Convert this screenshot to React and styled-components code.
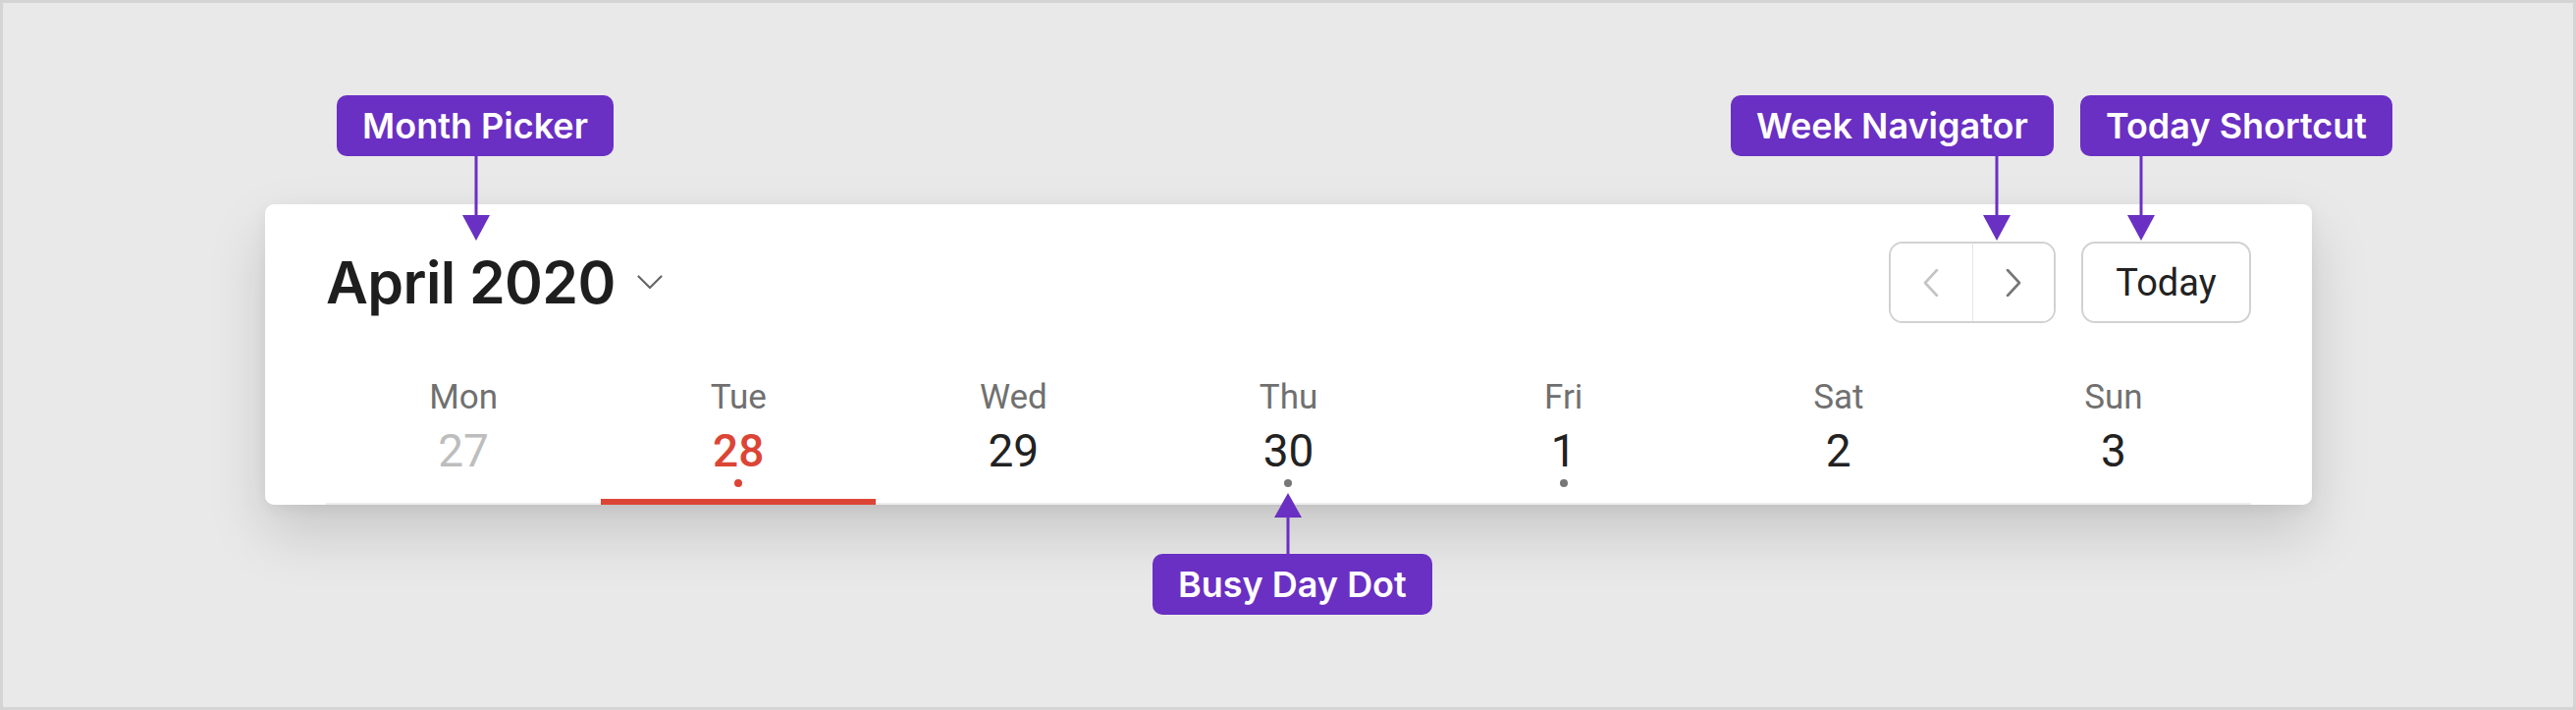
import styled, { createGlobalStyle } from "styled-components";

const GlobalStyle = createGlobalStyle`
  html, body {
    margin: 0;
    padding: 0;
    background: #e9e9e9;
  }
  * {
    box-sizing: border-box;
  }
`;

const PURPLE = "#6a2fc3";
const RED = "#dc4535";

const days = [
  { name: "Mon", date: 27, muted: true },
  { name: "Tue", date: 28, active: true, busy: true },
  { name: "Wed", date: 29 },
  { name: "Thu", date: 30, busy: true },
  { name: "Fri", date: 1, busy: true },
  { name: "Sat", date: 2 },
  { name: "Sun", date: 3 },
];

const callouts = [
  { label: "Month Picker", left: 343, top: 97, arrowX: 485 },
  { label: "Week Navigator", left: 1763, top: 97, arrowX: 2034 },
  { label: "Today Shortcut", left: 2119, top: 97, arrowX: 2181 },
  { label: "Busy Day Dot", left: 1174, top: 502, arrowX: 1312, up: true },
];

const Page = styled.div`
  position: relative;
  width: 2624px;
  height: 723px;
  border: 3px solid #d4d4d4;
  background: #e9e9e9;
  padding: 205px 0 0 267px;
  overflow: hidden;
`;

const Card = styled.div`
  width: 2085px;
  background: #fff;
  border-radius: 9px;
  padding: 38px 62px 0;
  box-shadow: 0 28px 60px rgba(0, 0, 0, 0.15), 0 4px 14px rgba(0, 0, 0, 0.05);
`;

const Header = styled.div`
  display: flex;
  align-items: center;
  justify-content: space-between;
  height: 83px;
`;

const MonthPicker = styled.div`
  display: flex;
  align-items: center;
  gap: 22px;
`;

const Title = styled.h1`
  margin: 0;
  font-family: Inter, "Liberation Sans", sans-serif;
  font-weight: 600;
  font-size: 59px;
  line-height: 1;
  letter-spacing: -0.6px;
  color: #1e1e1e;
`;

const Controls = styled.div`
  display: flex;
  align-items: center;
  gap: 26px;
`;

const NavGroup = styled.div`
  display: flex;
  width: 170px;
  height: 83px;
  border: 2px solid #d2d2d2;
  border-radius: 14px;
  overflow: hidden;
`;

const NavButton = styled.button`
  flex: 1;
  display: flex;
  align-items: center;
  justify-content: center;
  border: none;
  background: #fff;
  padding: 0;
  color: ${(p) => (p.$disabled ? "#c4c4c4" : "#777")};
  & + & {
    border-left: 1.5px solid #e4e4e4;
  }
`;

const TodayButton = styled.button`
  width: 173px;
  height: 83px;
  border: 2px solid #d2d2d2;
  border-radius: 14px;
  background: #fff;
  font-family: Roboto, "Liberation Sans", sans-serif;
  font-size: 38px;
  color: #222;
  padding: 0;
`;

const DaysGrid = styled.div`
  display: grid;
  grid-template-columns: repeat(7, 1fr);
  margin-top: 55px;
  border-bottom: 2px solid #ededed;
`;

const DayCell = styled.div`
  display: flex;
  flex-direction: column;
  align-items: center;
  font-family: Roboto, "Liberation Sans", sans-serif;
`;

const DayName = styled.div`
  font-size: 35px;
  line-height: 41px;
  color: #707070;
`;

const DayNumber = styled.div`
  margin-top: 7px;
  font-size: 46px;
  line-height: 54px;
  font-weight: ${(p) => (p.$active ? 500 : 400)};
  color: ${(p) => (p.$active ? RED : p.$muted ? "#bdbdbd" : "#222")};
`;

const Dot = styled.div`
  margin-top: 2px;
  width: 8px;
  height: 8px;
  border-radius: 50%;
  background: ${(p) => (p.$busy ? (p.$active ? RED : "#777") : "transparent")};
`;

const Underline = styled.div`
  align-self: stretch;
  margin-top: 12px;
  margin-bottom: -2px;
  height: 6px;
  background: ${(p) => (p.$active ? RED : "transparent")};
`;

const Callout = styled.div`
  position: absolute;
  display: flex;
  flex-direction: ${(p) => (p.$up ? "column-reverse" : "column")};
  align-items: flex-start;
`;

const Label = styled.div`
  height: 62px;
  padding: 0 26px;
  display: flex;
  align-items: center;
  border-radius: 10px;
  background: ${PURPLE};
  color: #fff;
  font-family: Inter, "Liberation Sans", sans-serif;
  font-weight: 600;
  font-size: 36px;
  white-space: nowrap;
`;

const Arrow = ({ up }) => (
  <svg width="28" height={up ? 62 : 86} viewBox={up ? "0 0 28 62" : "0 0 28 86"}>
    {up ? (
      <>
        <line x1="14" y1="24" x2="14" y2="62" stroke={PURPLE} strokeWidth="3" />
        <polygon points="0,25 28,25 14,0" fill={PURPLE} />
      </>
    ) : (
      <>
        <line x1="14" y1="0" x2="14" y2="62" stroke={PURPLE} strokeWidth="3" />
        <polygon points="0,60 28,60 14,86" fill={PURPLE} />
      </>
    )}
  </svg>
);

const ArrowSlot = styled.div`
  display: flex;
  margin-left: ${(p) => p.$offset}px;
`;

const Chevron = ({ dir }) => (
  <svg width="16" height="28" viewBox="0 0 16 28" fill="none">
    <polyline
      points={dir === "left" ? "14,1 2,14 14,27" : "2,1 14,14 2,27"}
      stroke="currentColor"
      strokeWidth="2.6"
      strokeLinecap="round"
      strokeLinejoin="round"
    />
  </svg>
);

const CaretDown = () => (
  <svg width="26" height="15" viewBox="0 0 26 15" fill="none">
    <polyline points="1.5,1.5 13,13 24.5,1.5" stroke="#666" strokeWidth="2.2" strokeLinecap="round" strokeLinejoin="round" />
  </svg>
);

export default function App() {
  return (
    <>
      <GlobalStyle />
      <Page>
        <Card>
          <Header>
            <MonthPicker>
              <Title>April 2020</Title>
              <CaretDown />
            </MonthPicker>
            <Controls>
              <NavGroup>
                <NavButton $disabled>
                  <Chevron dir="left" />
                </NavButton>
                <NavButton>
                  <Chevron dir="right" />
                </NavButton>
              </NavGroup>
              <TodayButton>Today</TodayButton>
            </Controls>
          </Header>
          <DaysGrid>
            {days.map((d) => (
              <DayCell key={d.name}>
                <DayName>{d.name}</DayName>
                <DayNumber $active={d.active} $muted={d.muted}>
                  {d.date}
                </DayNumber>
                <Dot $busy={d.busy} $active={d.active} />
                <Underline $active={d.active} />
              </DayCell>
            ))}
          </DaysGrid>
        </Card>

        {callouts.map((c) => (
          <Callout key={c.label} $up={c.up} style={{ left: c.left - 3, top: c.top - 3 }}>
            <Label>{c.label}</Label>
            <ArrowSlot $offset={c.arrowX - c.left - 14}>
              <Arrow up={c.up} />
            </ArrowSlot>
          </Callout>
        ))}
      </Page>
    </>
  );
}
